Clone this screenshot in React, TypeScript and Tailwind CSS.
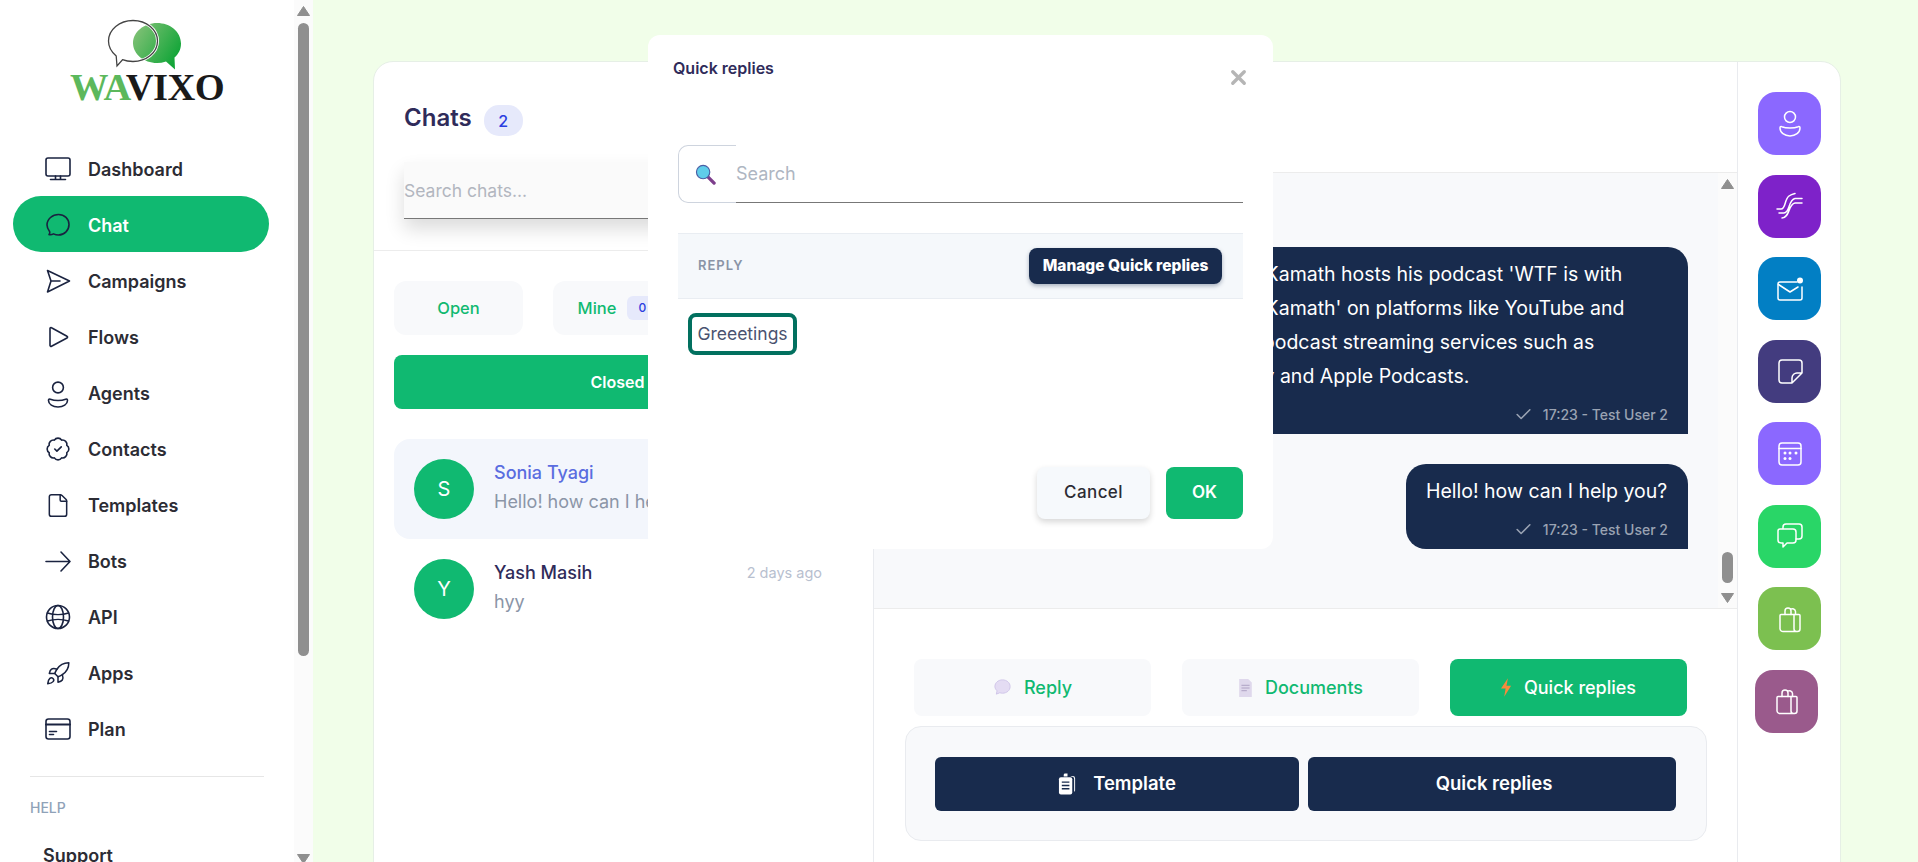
import { BadgeCheck, Check, File, Rocket, X } from 'lucide-react'
import type { ReactNode } from 'react'

const navy = 'stroke-[#1a2340]'

function NavSvg({ children, sw = 1.6 }: { children: ReactNode; sw?: number }) {
  return (
    <svg viewBox="0 0 26 26" width="26" height="26" fill="none" strokeWidth={sw} strokeLinecap="round" strokeLinejoin="round" className={`${navy} overflow-visible`}>
      {children}
    </svg>
  )
}

const navItems: { label: string; icon: ReactNode }[] = [
  {
    label: 'Dashboard',
    icon: (
      <NavSvg>
        <rect x="1" y="2" width="24" height="18" rx="2" />
        <path d="M10.500 20v3M15.500 20v3M5.500 23.500h15" />
      </NavSvg>
    ),
  },
  {
    label: 'Chat',
    icon: (
      <NavSvg>
        <path d="M13.500 2.500c6 0 10.500 4.300 10.500 10s-4.500 10.500-10.500 10.500c-2 0-3.500-.4-5-1.100-1.300.7-3 1.100-4.500.7.7-.8 1-1.900.7-2.800C2.900 17.300 2 15.300 2 13 2 7 7.500 2.500 13.500 2.500z" />
      </NavSvg>
    ),
  },
  {
    label: 'Campaigns',
    icon: (
      <NavSvg>
        <path d="M2.500 2.500 24.500 13 2.500 24 6 13zM6 13h9" />
      </NavSvg>
    ),
  },
  {
    label: 'Flows',
    icon: (
      <NavSvg>
        <path d="M5 4.500v17a1 1 0 0 0 1.500.8L22 14a1 1 0 0 0 0-1.800L6.500 3.700A1 1 0 0 0 5 4.500z" />
      </NavSvg>
    ),
  },
  {
    label: 'Agents',
    icon: (
      <NavSvg>
        <circle cx="13" cy="7.500" r="5.400" />
        <path d="M3.500 20.500c0-1.200.8-1.700 1.800-1.300 2.300.9 4.900 1.300 7.700 1.300s5.400-.4 7.700-1.300c1-.4 1.800.1 1.800 1.300 0 3.800-4.200 6.500-9.500 6.500s-9.500-2.700-9.500-6.500z" />
      </NavSvg>
    ),
  },
  { label: 'Contacts', icon: <BadgeCheck size={26} strokeWidth={1.5} className="text-[#1a2340]" /> },
  { label: 'Templates', icon: <File size={27} strokeWidth={1.4} className="text-[#1a2340]" /> },
  {
    label: 'Bots',
    icon: (
      <NavSvg>
        <path d="M1 13.500h24M16 4l9 9.500-9 9.500" />
      </NavSvg>
    ),
  },
  {
    label: 'API',
    icon: (
      <NavSvg>
        <circle cx="13" cy="13" r="11.500" />
        <ellipse cx="13" cy="13" rx="5.500" ry="11.500" />
        <path d="M2.500 9c6 2 15 2 21 0M2.500 17c6-2 15-2 21 0" />
      </NavSvg>
    ),
  },
  { label: 'Apps', icon: <Rocket size={27} strokeWidth={1.4} className="text-[#1a2340]" /> },
  {
    label: 'Plan',
    icon: (
      <NavSvg>
        <rect x="1" y="3" width="24" height="20" rx="2.500" />
        <path d="M1 8.500h24" strokeWidth="2" />
        <path d="M4.500 15.500h7M4.500 18.500h4" />
      </NavSvg>
    ),
  },
]

function RailSvg({ children }: { children: ReactNode }) {
  return (
    <svg viewBox="0 0 28 28" width="28" height="28" fill="none" stroke="white" strokeWidth="1.500" strokeLinecap="round" strokeLinejoin="round">
      {children}
    </svg>
  )
}

const bagIcon = (
  <RailSvg>
    <path d="M5 9.500h18a1 1 0 0 1 1 1V24a2.500 2.500 0 0 1-2.500 2.500h-14A3 3 0 0 1 4 24V10.500a1 1 0 0 1 1-1zM18 9.500V24a2.500 2.500 0 0 0 2.500 2.500" />
    <path d="M9 9.500V6a3 3 0 0 1 6 0v3.500M14.500 4.500a3 3 0 0 1 5 2v3" />
  </RailSvg>
)

const railItems: { color: string; icon: ReactNode; shift?: boolean }[] = [
  {
    color: 'bg-[#8b68ff]',
    icon: (
      <RailSvg>
        <circle cx="14" cy="7" r="5.500" />
        <path d="M4 18c0-1.200.8-1.800 1.800-1.300 2.400 1 5.200 1.300 8.200 1.300s5.800-.3 8.200-1.300c1-.5 1.800.1 1.800 1.300 0 4.500-4.500 8-10 8s-10-3.500-10-8z" />
      </RailSvg>
    ),
  },
  {
    color: 'bg-[#7e22c9]',
    icon: (
      <RailSvg>
        <path d="M1 17h4c5 0 3-9 8-13 2-1.500 4-2 6-2.500M3 21h5c6 0 4-13 11-14.500h7M6 26c8 0 6-14 13-15h7" />
      </RailSvg>
    ),
  },
  {
    color: 'bg-[#027fc4]',
    icon: (
      <RailSvg>
        <path d="M21 7H4a2 2 0 0 0-2 2v14a2 2 0 0 0 2 2h20a2 2 0 0 0 2-2V12" />
        <path d="M2.500 9.500 14 17l8-5" />
        <circle cx="24" cy="5.500" r="3" fill="white" stroke="none" />
      </RailSvg>
    ),
  },
  {
    color: 'bg-[#433c7f]',
    icon: (
      <RailSvg>
        <path d="M16 26H6a3 3 0 0 1-3-3V6a3 3 0 0 1 3-3h17a3 3 0 0 1 3 3v10zM26 16l-4.500 0a5 5 0 0 0-5.500 5v5" />
      </RailSvg>
    ),
  },
  {
    color: 'bg-[#8b68ff]',
    icon: (
      <RailSvg>
        <rect x="3" y="3" width="22" height="22" rx="3" />
        <path d="M3 8.500h22" />
        <g fill="white" stroke="none">
          <circle cx="9" cy="13" r="1.500" />
          <circle cx="14" cy="13" r="1.500" />
          <circle cx="20" cy="13" r="1.500" />
          <circle cx="9" cy="18.500" r="1.500" />
          <circle cx="14" cy="18.500" r="1.500" />
        </g>
      </RailSvg>
    ),
  },
  {
    color: 'bg-[#29d667]',
    icon: (
      <RailSvg>
        <path d="M4 7h13a3 3 0 0 1 3 3v8a3 3 0 0 1-3 3H11l-4 4v-4H5a3 3 0 0 1-3-3v-9a2 2 0 0 1 2-2z" />
        <path d="M7 6.500V5a3 3 0 0 1 3-3h13a3 3 0 0 1 3 3v9a3 3 0 0 1-3 3h-3" />
      </RailSvg>
    ),
  },
  { color: 'bg-[#7cc050]', icon: bagIcon },
  { color: 'bg-[#9a5a8c]', icon: bagIcon, shift: true },
]

function ScrollTrack({ width, thumbClass, arrowTop, arrowBottom }: { width: string; thumbClass: string; arrowTop: string; arrowBottom: string }) {
  return (
    <div className={`${width} shrink-0 flex flex-col items-center bg-[#fbfbfb]`}>
      <svg viewBox="0 0 13 10" width="13" height="10" className={`shrink-0 ${arrowTop}`}>
        <path d="M6.500 0.500 12.500 9.500H.5z" fill="#8f8f8f" stroke="#8f8f8f" strokeLinejoin="round" />
      </svg>
      <div className={`w-[11px] rounded-[6px] bg-[#8f8f8f] shrink-0 ${thumbClass}`} />
      <svg viewBox="0 0 13 10" width="13" height="10" className={`shrink-0 ${arrowBottom}`}>
        <path d="M.5.500H12.500L6.500 9.500z" fill="#8f8f8f" stroke="#8f8f8f" strokeLinejoin="round" />
      </svg>
    </div>
  )
}

function Logo() {
  return (
    <div className="h-[140px] pt-[15px] flex flex-col items-center">
      <svg viewBox="0 0 85 60" width="85" height="60" className="-mb-[3px] -ml-[8px] shrink-0">
        <defs>
          <linearGradient id="logoGreen" x1="0" y1="0" x2="1" y2="0.6">
            <stop offset="0" stopColor="#8cc47c" />
            <stop offset="1" stopColor="#12a538" />
          </linearGradient>
        </defs>
        <path d="M56 8c13 0 24 8.500 24 20.500 0 6-2.500 10.500-6.500 14l.5 12-9-8c-3 1-6 1.500-9 1.500-13 0-24-9-24-20S43 8 56 8z" fill="url(#logoGreen)" />
        <path d="M32 5.500c13.500 0 24.500 9 24.500 20.500S45.500 46.500 32 46.500c-4 0-7.500-.6-10.500-1.800L16 51l-.8-10C10.500 37 7.500 32 7.500 26 7.500 14.500 18.500 5.500 32 5.500z" fill="none" stroke="white" strokeWidth="3" />
        <path d="M32 5.500c13.500 0 24.500 9 24.500 20.500S45.500 46.500 32 46.500c-4 0-7.500-.6-10.500-1.800L16 51l-.8-10C10.500 37 7.500 32 7.500 26 7.500 14.500 18.500 5.500 32 5.500z" fill="none" stroke="#444" strokeWidth="1.300" />
      </svg>
      <div className="font-['Liberation_Serif',serif] font-bold text-[38.500px] leading-[30px] tracking-[-0.6px] whitespace-nowrap">
        <span className="text-[#5cb85c]">WA</span>
        <span className="text-[#1a1a1a]">VIXO</span>
      </div>
    </div>
  )
}

function Sidebar() {
  return (
    <aside className="w-[313px] h-full shrink-0 flex bg-white overflow-hidden">
      <div className="w-[294px] shrink-0">
        <Logo />
        <nav className="w-[256px] ml-[13px]">
          {navItems.map((item) => (
            <div
              key={item.label}
              className={`h-14 flex items-center pl-[32px] pt-[2px] gap-[17px] rounded-full text-[18px] font-semibold ${
                item.label === 'Chat' ? 'bg-[#10b971] text-white' : 'text-[#2c2c34]'
              }`}
            >
              <span className="w-[26px] h-[26px] shrink-0 flex items-center justify-center">{item.icon}</span>
              <span>{item.label}</span>
            </div>
          ))}
        </nav>
        <div className="ml-[30px] mt-[20px] w-[234px] border-t border-[#e6e6e6]" />
        <div className="ml-[30px] mt-[21px] text-[14px] leading-5 font-medium text-[#8fa2b8]">HELP</div>
        <div className="ml-[43px] mt-[26px] text-[18px] leading-6 font-semibold text-[#2c2c34]">Support</div>
      </div>
      <ScrollTrack width="w-[19px]" thumbClass="mt-[7px] h-[633px]" arrowTop="mt-[6px]" arrowBottom="mt-[198px]" />
    </aside>
  )
}

function ChatRow({ letter, name, preview, time, active }: { letter: string; name: string; preview: string; time: string; active?: boolean }) {
  return (
    <div className={`h-[100px] flex items-center gap-5 px-5 rounded-[16px] ${active ? 'bg-[#f3f6fc]' : ''}`}>
      <div className="w-[60px] h-[60px] shrink-0 rounded-full bg-[#10b971] text-white text-[20px] flex items-center justify-center">{letter}</div>
      <div className="flex-1 min-w-0 pr-[11px] pb-[3px]">
        <div className="flex items-center justify-between">
          <span className={`text-[18px] leading-[26px] font-medium ${active ? 'text-[#5a6de0]' : 'text-[#2f2b5a]'}`}>{name}</span>
          <span className="text-[14.500px] text-[#b8c0cf]">{time}</span>
        </div>
        <div className="mt-[3px] text-[18px] leading-[26px] text-[#8b95a7] whitespace-nowrap">{preview}</div>
      </div>
    </div>
  )
}

function ChatsPanel() {
  return (
    <section className="w-[500px] shrink-0 border-r border-[#e9ebef]">
      <div className="h-[189px] pl-[30px] pt-[43px] border-b border-[#ececec]">
        <div className="flex items-center gap-[12px] h-[31px]">
          <span className="-mt-[5px] text-[24px] font-semibold text-[#2f2b5a]">Chats</span>
          <span className="w-[39px] h-[31px] rounded-[15px] bg-[#e6e9fb] text-[#2b3de0] text-[16px] font-medium flex items-center justify-center">2</span>
        </div>
        <div className="mt-[26px] w-[440px] h-[57px] flex items-center pt-[2px] bg-[#fafafa] border-b border-[#777] shadow-[0_10px_18px_rgba(0,0,0,0.14)] text-[17.500px] text-[#b2b6bf]">
          Search chats...
        </div>
      </div>
      <div className="px-5 pt-[30px]">
        <div className="grid grid-cols-[129px_129px_1fr] gap-[30px]">
          <div className="h-[54px] rounded-[12px] bg-[#f8f9fb] text-[#10b971] font-medium text-[16.500px] flex items-center justify-center">Open</div>
          <div className="h-[54px] rounded-[12px] bg-[#f8f9fb] text-[#10b971] font-medium text-[16.500px] flex items-center justify-center gap-[11px]">
            Mine
            <span className="w-[30px] h-[24px] rounded-[6px] bg-[#e6e9fb] text-[#2b3de0] text-[12px] flex items-center justify-center">0</span>
          </div>
          <div className="h-[54px] rounded-[12px] bg-[#f8f9fb]" />
        </div>
        <div className="mt-5 h-[54px] rounded-[8px] bg-[#10b971] text-white text-[16px] font-semibold flex items-center justify-center pr-[12px]">
          Closed
        </div>
        <div className="mt-[30px]">
          <ChatRow letter="S" name="Sonia Tyagi" preview="Hello! how can I help you?" time="2 days ago" active />
          <ChatRow letter="Y" name="Yash Masih" preview="hyy" time="2 days ago" />
        </div>
      </div>
    </section>
  )
}

function Bubble({ children, wide }: { children: ReactNode; wide?: boolean }) {
  return (
    <div className={`bg-[#182b4d] text-white rounded-t-[20px] px-5 pt-[10px] pb-[10px] ${wide ? 'w-[499px] rounded-bl-none' : 'w-[282px] rounded-bl-[20px]'}`}>
      <div className="text-[19.500px] leading-[34px] whitespace-nowrap">{children}</div>
      <div className="mt-[11px] h-5 flex items-center justify-end gap-[10px] text-[14px] font-medium text-[#9aa3b3]">
        <Check size={19} strokeWidth={2} />
        <span>17:23 - Test User 2</span>
      </div>
    </div>
  )
}

const ReplyGlyph = (
  <svg viewBox="0 0 20 20" width="19" height="19">
    <path d="M10 2c4.500 0 8 3 8 7s-3.500 7-8 7c-1 0-2-.2-2.800-.5L3.500 17l.8-3.500C3 12.200 2 10.700 2 9c0-4 3.500-7 8-7z" fill="#e4dcf3" stroke="#cfc4e8" />
  </svg>
)

const DocGlyph = (
  <svg viewBox="0 0 16 20" width="15" height="18">
    <path d="M1 0h10l4 4v16H1z" fill="#dfd8ec" />
    <path d="M3.500 7h9M3.500 10h9M3.500 13h6" stroke="#a99cc0" strokeWidth="1" />
  </svg>
)

const BoltGlyph = (
  <svg viewBox="0 0 12 20" width="11" height="19">
    <path d="M7.500 0 0 11h5l-1.500 9L11 8H6z" fill="#f58a3c" />
  </svg>
)

function ChatArea() {
  const tabs = [
    { label: 'Reply', glyph: ReplyGlyph },
    { label: 'Documents', glyph: DocGlyph },
    { label: 'Quick replies', glyph: BoltGlyph, active: true },
  ]
  return (
    <section className="w-[864px] shrink-0 border-r border-[#e9ebef]">
      <div className="h-[110px]" />
      <div className="h-[437px] flex bg-[#f8f9fb] border-y border-[#ececec]">
        <div className="flex-1 flex flex-col items-end gap-[30px] pt-[74px] pr-[30px] overflow-hidden">
          <Bubble wide>
            Nikhil Kamath hosts his podcast 'WTF is with
            <br />
            Nikhil Kamath' on platforms like YouTube and
            <br />
            other podcast streaming services such as
            <br />
            Spotify and Apple Podcasts.
          </Bubble>
          <Bubble>Hello! how can I help you?</Bubble>
        </div>
        <ScrollTrack width="w-[19px]" thumbClass="mt-[363px] h-[31px]" arrowTop="mt-[6px]" arrowBottom="mt-[10px]" />
      </div>
      <div className="pt-[50px]">
        <div className="ml-[40px] w-[773px] grid grid-cols-3 gap-[31px]">
          {tabs.map((tab) => (
            <div
              key={tab.label}
              className={`h-[57px] rounded-[8px] flex items-center justify-center gap-[12px] text-[18px] font-medium ${
                tab.active ? 'bg-[#10b971] text-white' : 'bg-[#f8f9fb] text-[#10b971]'
              }`}
            >
              {tab.glyph}
              {tab.label}
            </div>
          ))}
        </div>
        <div className="ml-[31px] mt-[10px] w-[802px] h-[115px] rounded-[16px] bg-[#f8f9fb] border border-[#e9ebef] pl-[29px] pr-[30px] pt-[30px] flex gap-[9px]">
          <div className="flex-1 h-[54px] rounded-[6px] bg-[#182b4d] text-white text-[18.500px] font-semibold flex items-center justify-center gap-[16px]">
            <svg viewBox="0 0 20 24" width="19" height="24">
              <path d="M6 4V2.500A1.500 1.500 0 0 1 7.500 1H10v3zM13 3.500h2.500A2.500 2.500 0 0 1 18 6v12.500a2 2 0 0 1-1 1.700V7a3 3 0 0 0-3-3z" fill="white" />
              <rect x="1" y="5" width="14" height="18" rx="2" fill="white" />
              <path d="M4 10h8M4 13.500h8M4 17h8" stroke="#182b4d" strokeWidth="1.500" />
            </svg>
            Template
          </div>
          <div className="flex-1 h-[54px] pl-[4px] rounded-[6px] bg-[#182b4d] text-white text-[18.500px] font-semibold flex items-center justify-center">Quick replies</div>
        </div>
      </div>
    </section>
  )
}

function Rail() {
  return (
    <aside className="flex-1 pl-[20px] pt-[30px] flex flex-col gap-[19.500px]">
      {railItems.map((item, i) => (
        <div key={i} className={`w-[63px] h-[63px] rounded-[18px] flex items-center justify-center ${item.color} ${item.shift ? '-ml-[3px]' : ''}`}>
          {item.icon}
        </div>
      ))}
    </aside>
  )
}

function QuickRepliesModal() {
  return (
    <div className="absolute left-[648px] top-[35px] w-[625px] h-[514px] bg-white rounded-[12px] px-[30px] pt-[21px]">
      <div className="flex justify-between">
        <h2 className="ml-[-5px] text-[16px] leading-[24px] font-semibold text-[#2f2b5a]">Quick replies</h2>
        <X size={23} strokeWidth={3.500} className="text-[#b5b5b5] mt-[10px] mr-[-7px]" />
      </div>
      <div className="mt-[56px] flex h-[58px]">
        <div className="w-[58px] shrink-0 rounded-l-[10px] border border-r-0 border-[#ced4de] flex items-center justify-center pr-1">
          <svg viewBox="0 0 22 22" width="21" height="21">
            <path d="M13 13l7 7" stroke="#7d3f8c" strokeWidth="3.500" strokeLinecap="round" />
            <circle cx="8.500" cy="8.500" r="7" fill="#5fcdea" stroke="#4a5fa5" strokeWidth="1.200" />
          </svg>
        </div>
        <div className="flex-1 border-b border-[#777] flex items-center text-[18px] text-[#aeb6c2]">Search</div>
      </div>
      <div className="mt-[30px] h-[66px] bg-[#f5f8fb] border-y border-[#e9edf2] flex items-center justify-between pl-[20px] pr-[21px]">
        <span className="text-[13px] font-semibold tracking-[1px] text-[#8a94a6]">REPLY</span>
        <span className="h-[36px] w-[193px] rounded-[8px] bg-[#182b4d] text-white text-[15.500px] font-extrabold flex items-center justify-center shadow-[0_2px_4px_rgba(24,43,77,0.35)] whitespace-nowrap">Manage Quick replies</span>
      </div>
      <div className="mt-[14px] ml-[10px] w-[109px] h-[42px] border-[4px] border-[#02705f] rounded-[8px] flex items-center justify-center text-[17.500px] text-[#4a5270]">Greeetings</div>
      <div className="mt-[112px] flex justify-end gap-[16px]">
        <div className="w-[113px] h-[52px] rounded-[8px] bg-[#f6f9fc] shadow-[0_3px_6px_rgba(0,0,0,0.16)] text-[17px] font-medium tracking-[0.4px] text-[#2c2c34] flex items-center justify-center">Cancel</div>
        <div className="w-[77px] h-[52px] rounded-[8px] bg-[#10b971] text-white text-[17px] font-semibold flex items-center justify-center">OK</div>
      </div>
    </div>
  )
}

export default function App() {
  return (
    <div className="relative w-[1918px] h-[862px] overflow-hidden flex bg-[#f1fee9] font-['Inter',sans-serif]">
      <Sidebar />
      <main className="flex-1 min-w-0 pl-[60px] pt-[61px] pr-[77px]">
        <div className="h-[860px] flex bg-white rounded-[20px] border border-[#e6efe6] overflow-hidden">
          <ChatsPanel />
          <ChatArea />
          <Rail />
        </div>
      </main>
      <QuickRepliesModal />
    </div>
  )
}
